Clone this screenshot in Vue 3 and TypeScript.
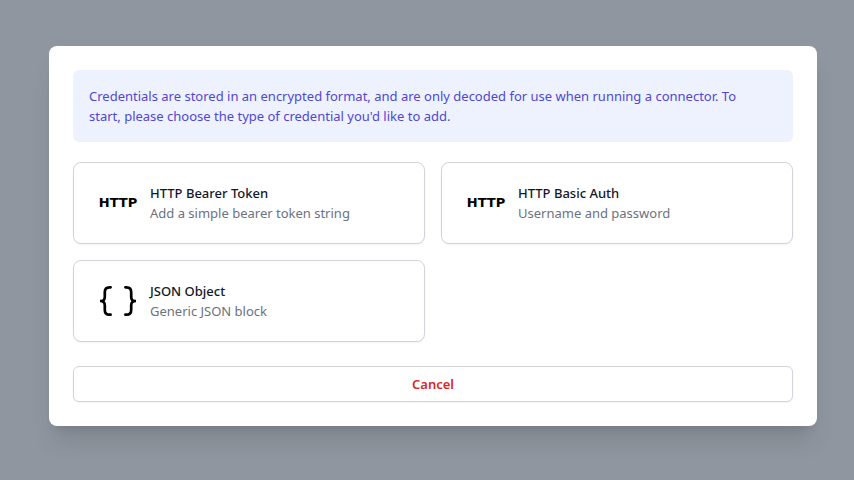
<script setup lang="ts">
interface CredentialType {
  id: string
  icon: 'http' | 'json'
  title: string
  description: string
}

const credentialTypes: CredentialType[] = [
  { id: 'bearer', icon: 'http', title: 'HTTP Bearer Token', description: 'Add a simple bearer token string' },
  { id: 'basic', icon: 'http', title: 'HTTP Basic Auth', description: 'Username and password' },
  { id: 'json', icon: 'json', title: 'JSON Object', description: 'Generic JSON block' },
]

const emit = defineEmits<{ select: [id: string]; cancel: [] }>()
</script>

<template>
  <div class="overlay">
    <section class="dialog" role="dialog" aria-modal="true">
      <p class="notice">
        Credentials are stored in an encrypted format, and are only decoded for use when running a
        connector. To start, please choose the type of credential you'd like to add.
      </p>
      <div class="types">
        <button
          v-for="type in credentialTypes"
          :key="type.id"
          type="button"
          class="card"
          @click="emit('select', type.id)"
        >
          <span class="icon" aria-hidden="true">
            <span v-if="type.icon === 'http'" class="http">HTTP</span>
            <svg v-else viewBox="0 0 40 32" width="40" height="32">
              <g fill="none" stroke="currentColor" stroke-width="2.7" stroke-linecap="round">
                <path d="M12.6 2.3H11.5Q6.8 2.3 6.8 7V11.8Q6.8 16 3.2 16H2Q6.8 16 6.8 20.2V25Q6.8 29.7 11.5 29.7H12.6" />
                <path d="M27.4 2.3H28.5Q33.2 2.3 33.2 7V11.8Q33.2 16 36.8 16H38Q33.2 16 33.2 20.2V25Q33.2 29.7 28.5 29.7H27.4" />
              </g>
            </svg>
          </span>
          <span class="text">
            <span class="title">{{ type.title }}</span>
            <span class="description">{{ type.description }}</span>
          </span>
        </button>
      </div>
      <button type="button" class="cancel" @click="emit('cancel')">Cancel</button>
    </section>
  </div>
</template>

<style>
body {
  background: #9096a0;
}
</style>

<style scoped>
.overlay {
  box-sizing: border-box;
  min-height: 100vh;
  display: flex;
  align-items: center;
  justify-content: center;
  padding: 16px 16px 24px 28px;
  background: #8f969f;
  font-family: "Noto Sans", sans-serif;
  font-size: 13px;
  line-height: 20px;
}

.dialog {
  box-sizing: border-box;
  width: 100%;
  max-width: 768px;
  padding: 24px;
  border-radius: 8px;
  background: #fff;
  box-shadow: 0 20px 25px -5px rgb(0 0 0 / 10%), 0 8px 10px -6px rgb(0 0 0 / 10%);
}

.notice {
  margin: 0 0 20px;
  padding: 16px 32px 16px 16px;
  border-radius: 6px;
  background: #eef2ff;
  color: #5147d0;
}

.types {
  display: grid;
  grid-template-columns: repeat(2, minmax(0, 1fr));
  gap: 16px;
}

.card,
.cancel {
  border: 1px solid #d1d5db;
  background: #fff;
  box-shadow: 0 1px 2px rgb(0 0 0 / 5%);
  font: inherit;
  cursor: pointer;
}

.card {
  display: flex;
  align-items: center;
  gap: 12px;
  padding: 20px 24px;
  border-radius: 8px;
  text-align: left;
}

.icon {
  flex: none;
  display: flex;
  align-items: center;
  justify-content: center;
  width: 40px;
  height: 40px;
  color: #000;
}

.http {
  font-family: "DejaVu Sans", sans-serif;
  font-size: 13px;
  font-weight: 700;
}

.text {
  min-width: 0;
}

.title,
.description {
  display: block;
}

.title {
  color: #111827;
  font-weight: 500;
}

.description {
  color: #6b7280;
}

.cancel {
  width: 100%;
  margin-top: 24px;
  padding: 7px 16px;
  border-radius: 6px;
  color: #dc2626;
  font-weight: 600;
}
</style>
